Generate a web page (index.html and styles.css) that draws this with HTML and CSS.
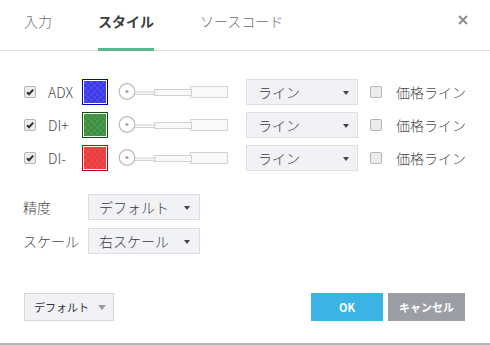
FILE: index.html
```html
<!DOCTYPE html>
<html lang="ja">
<head>
<meta charset="utf-8">
<link rel="stylesheet" href="styles.css">
</head>
<body>
<div class="dialog">
  <div class="tabs">
    <div class="tab">入力</div>
    <div class="tab active">スタイル</div>
    <div class="tab">ソースコード</div>
    <div class="close">
      <svg width="10" height="10" viewBox="0 0 10 10"><path d="M1 1L9 9M9 1L1 9" stroke="#8a8e96" stroke-width="2"/></svg>
    </div>
  </div>
  <div class="content">
    <div class="plots">
      <div class="plot-row">
        <span class="cb checked"><svg width="10" height="10" viewBox="0 0 10 10"><path d="M2 5.2L4 7.2L8.2 2.6" stroke="#333" stroke-width="2" fill="none"/></svg></span>
        <span class="plot-label">ADX</span>
        <span class="swatch swatch-blue"><span class="swatch-fill"></span></span>
        <svg class="slider" width="110" height="20" viewBox="0 0 110 20">
          <rect x="72.5" y="4.5" width="37" height="11" fill="#f9f9f9" stroke="#d2d2d2"/>
          <rect x="36.5" y="7.5" width="37" height="6" fill="#f9f9f9" stroke="#d2d2d2"/>
          <rect x="16" y="10" width="21" height="2.5" fill="#f9f9f9" stroke="#c4c7cc" stroke-width="0.8"/>
          <circle cx="9" cy="9.5" r="7.8" fill="#fff" stroke="#b8bcc4" stroke-width="1.2"/>
          <circle cx="9" cy="9.5" r="1.6" fill="#a3a7ae"/>
        </svg>
        <span class="select select-line"><span>ライン</span><i class="caret"></i></span>
        <span class="cb"></span>
        <span class="price-label">価格ライン</span>
      </div>
      <div class="plot-row">
        <span class="cb checked"><svg width="10" height="10" viewBox="0 0 10 10"><path d="M2 5.2L4 7.2L8.2 2.6" stroke="#333" stroke-width="2" fill="none"/></svg></span>
        <span class="plot-label">DI+</span>
        <span class="swatch swatch-green"><span class="swatch-fill"></span></span>
        <svg class="slider" width="110" height="20" viewBox="0 0 110 20">
          <rect x="72.5" y="4.5" width="37" height="11" fill="#f9f9f9" stroke="#d2d2d2"/>
          <rect x="36.5" y="7.5" width="37" height="6" fill="#f9f9f9" stroke="#d2d2d2"/>
          <rect x="16" y="10" width="21" height="2.5" fill="#f9f9f9" stroke="#c4c7cc" stroke-width="0.8"/>
          <circle cx="9" cy="9.5" r="7.8" fill="#fff" stroke="#b8bcc4" stroke-width="1.2"/>
          <circle cx="9" cy="9.5" r="1.6" fill="#a3a7ae"/>
        </svg>
        <span class="select select-line"><span>ライン</span><i class="caret"></i></span>
        <span class="cb"></span>
        <span class="price-label">価格ライン</span>
      </div>
      <div class="plot-row">
        <span class="cb checked"><svg width="10" height="10" viewBox="0 0 10 10"><path d="M2 5.2L4 7.2L8.2 2.6" stroke="#333" stroke-width="2" fill="none"/></svg></span>
        <span class="plot-label">DI-</span>
        <span class="swatch swatch-red"><span class="swatch-fill"></span></span>
        <svg class="slider" width="110" height="20" viewBox="0 0 110 20">
          <rect x="72.5" y="4.5" width="37" height="11" fill="#f9f9f9" stroke="#d2d2d2"/>
          <rect x="36.5" y="7.5" width="37" height="6" fill="#f9f9f9" stroke="#d2d2d2"/>
          <rect x="16" y="10" width="21" height="2.5" fill="#f9f9f9" stroke="#c4c7cc" stroke-width="0.8"/>
          <circle cx="9" cy="9.5" r="7.8" fill="#fff" stroke="#b8bcc4" stroke-width="1.2"/>
          <circle cx="9" cy="9.5" r="1.6" fill="#a3a7ae"/>
        </svg>
        <span class="select select-line"><span>ライン</span><i class="caret"></i></span>
        <span class="cb"></span>
        <span class="price-label">価格ライン</span>
      </div>
    </div>
    <div class="settings">
      <div class="setting-row">
        <span class="setting-label">精度</span>
        <span class="select select-setting"><span>デフォルト</span><i class="caret"></i></span>
      </div>
      <div class="setting-row">
        <span class="setting-label">スケール</span>
        <span class="select select-setting"><span>右スケール</span><i class="caret"></i></span>
      </div>
    </div>
  </div>
  <div class="footer">
    <span class="btn btn-default">デフォルト<i class="caret caret-light"></i></span>
    <span class="spacer"></span>
    <span class="btn btn-ok">OK</span>
    <span class="btn btn-cancel">キャンセル</span>
  </div>
</div>
</body>
</html>
```
FILE: styles.css
```css
* { box-sizing: border-box; }
html, body { margin: 0; padding: 0; background: #fff; }
body {
  font-family: "Noto Sans CJK JP", "Noto Sans", sans-serif;
  color: #4a4a4a;
  font-size: 14px;
  font-weight: 300;
}
.dialog {
  width: 490px;
  height: 345px;
  border-bottom: 2px solid #b4b4b4;
  display: flex;
  flex-direction: column;
}
.tabs {
  height: 51px;
  border-bottom: 1px solid #e0e0e0;
  display: flex;
  align-items: stretch;
  padding-left: 24px;
  padding-right: 22px;
}
.tab {
  font-size: 14px;
  color: #6b6f76;
  margin-right: 46px;
  display: flex;
  align-items: center;
  padding-bottom: 6px;
  border-bottom: 3px solid transparent;
  margin-bottom: -1px;
}
.tab.active {
  color: #3a3d42;
  font-weight: bold;
  border-bottom-color: #58b98a;
}
.close {
  margin-left: auto;
  display: flex;
  align-items: center;
  padding-bottom: 11px;
}
.close svg { display: block; }
.content {
  padding: 28px 0 0 24px;
}
.plots {
  display: flex;
  flex-direction: column;
  gap: 7px;
}
.plot-row {
  display: flex;
  align-items: center;
  height: 26px;
}
.cb {
  width: 12px;
  height: 12px;
  border: 1px solid #b5b5b5;
  border-radius: 2px;
  background: #ececec;
  display: inline-flex;
  align-items: center;
  justify-content: center;
  flex: none;
}
.cb svg { display: block; }
.plot-label {
  margin-left: 12px;
  width: 34px;
  color: #4a4a4a;
}
.swatch {
  width: 26px;
  height: 26px;
  border: 1px solid;
  padding: 1px;
  background: #fff;
  flex: none;
}
.swatch-fill {
  display: block;
  width: 100%;
  height: 100%;
  background-size: 6px 6px;
  background-position: 0 0, 3px 3px;
}
.swatch-blue { border-color: #0000b4; }
.swatch-blue .swatch-fill {
  background-color: #4a4af0;
  background-image: linear-gradient(45deg, #3a3ade 25%, transparent 25%, transparent 75%, #3a3ade 75%), linear-gradient(45deg, #3a3ade 25%, transparent 25%, transparent 75%, #3a3ade 75%);
}
.swatch-green { border-color: #0d520d; }
.swatch-green .swatch-fill {
  background-color: #4a9a4a;
  background-image: linear-gradient(45deg, #3f8e3f 25%, transparent 25%, transparent 75%, #3f8e3f 75%), linear-gradient(45deg, #3f8e3f 25%, transparent 25%, transparent 75%, #3f8e3f 75%);
}
.swatch-red { border-color: #cc0000; }
.swatch-red .swatch-fill {
  background-color: #f04848;
  background-image: linear-gradient(45deg, #e63e3e 25%, transparent 25%, transparent 75%, #e63e3e 75%), linear-gradient(45deg, #e63e3e 25%, transparent 25%, transparent 75%, #e63e3e 75%);
}
.slider {
  margin-left: 10px;
  display: block;
  flex: none;
}
.select {
  display: flex;
  align-items: center;
  height: 26px;
  background: #f1f2f6;
  border: 1px solid #dcdee3;
  color: #3a3a3a;
  padding-left: 11px;
  padding-right: 8px;
  flex: none;
}
.select span { flex: 1; }
.caret {
  width: 0;
  height: 0;
  border-left: 3.5px solid transparent;
  border-right: 3.5px solid transparent;
  border-top: 4px solid #444;
  margin-top: 2px;
}
.select-line {
  width: 112px;
  margin-left: 18px;
}
.cb + .price-label { margin-left: 14px; }
.select-line + .cb { margin-left: 12px; }
.price-label { color: #4a4a4a; }
.settings {
  margin-top: 23px;
  display: flex;
  flex-direction: column;
  gap: 8px;
}
.setting-row {
  display: flex;
  align-items: center;
  height: 26px;
}
.setting-label {
  width: 65px;
  margin-left: -1px;
  color: #4a4a4a;
}
.select-setting {
  width: 112px;
  padding-left: 10px;
  padding-right: 9px;
}
.footer {
  margin-top: auto;
  margin-bottom: 22px;
  display: flex;
  align-items: center;
  padding: 0 25px 0 24px;
  gap: 5px;
}
.spacer { flex: 1; }
.btn {
  height: 28px;
  display: inline-flex;
  align-items: center;
  justify-content: center;
  font-size: 11px;
}
.btn-default {
  width: 90px;
  background: #f1f2f6;
  border: 1px solid #d5d8dd;
  color: #333;
  gap: 9px;
  padding-left: 2px;
  font-weight: 400;
}
.caret-light {
  border-top-color: #9a9a9a;
  border-left-width: 4px;
  border-right-width: 4px;
  border-top-width: 5px;
  margin-top: 0;
}
.btn-ok {
  width: 72px;
  background: #3bb3e4;
  color: #fff;
  font-weight: bold;
}
.btn-cancel {
  width: 77px;
  background: #9b9ea5;
  color: #fff;
  font-weight: bold;
}
```
